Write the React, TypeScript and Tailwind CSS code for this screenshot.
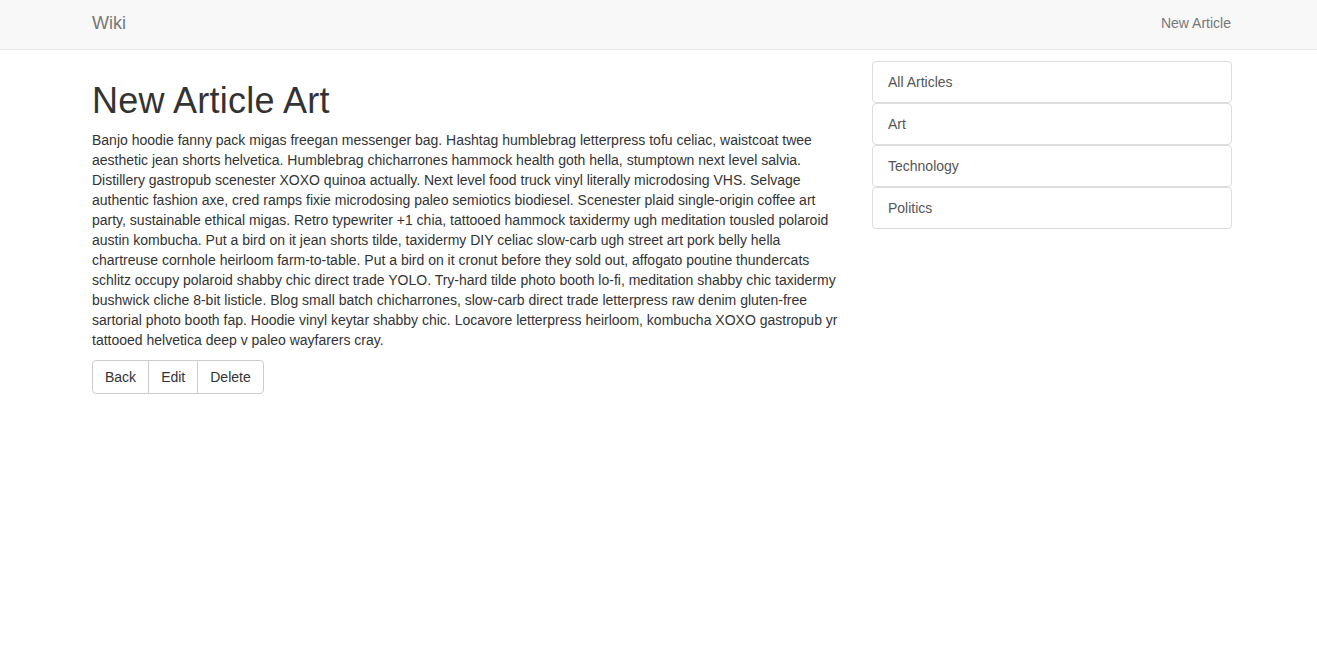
import React from "react";

const body =
  "Banjo hoodie fanny pack migas freegan messenger bag. Hashtag humblebrag letterpress tofu celiac, waistcoat twee aesthetic jean shorts helvetica. Humblebrag chicharrones hammock health goth hella, stumptown next level salvia. Distillery gastropub scenester XOXO quinoa actually. Next level food truck vinyl literally microdosing VHS. Selvage authentic fashion axe, cred ramps fixie microdosing paleo semiotics biodiesel. Scenester plaid single-origin coffee art party, sustainable ethical migas. Retro typewriter +1 chia, tattooed hammock taxidermy ugh meditation tousled polaroid austin kombucha. Put a bird on it jean shorts tilde, taxidermy DIY celiac slow-carb ugh street art pork belly hella chartreuse cornhole heirloom farm-to-table. Put a bird on it cronut before they sold out, affogato poutine thundercats schlitz occupy polaroid shabby chic direct trade YOLO. Try-hard tilde photo booth lo-fi, meditation shabby chic taxidermy bushwick cliche 8-bit listicle. Blog small batch chicharrones, slow-carb direct trade letterpress raw denim gluten-free sartorial photo booth fap. Hoodie vinyl keytar shabby chic. Locavore letterpress heirloom, kombucha XOXO gastropub yr tattooed helvetica deep v paleo wayfarers cray.";

const categories = ["All Articles", "Art", "Technology", "Politics"];

export default function App() {
  return (
    <div className="min-h-[656px] bg-white font-['Liberation_Sans',Arial,sans-serif] text-[14px] leading-[20px] text-[#333]">
      <nav className="h-[50px] border-b border-[#e7e7e7] bg-[#f8f8f8]">
        <div className="ml-[77px] flex w-[1170px] items-center justify-between pl-[15px] pr-[16px]">
          <a className="pt-[13px] pb-[17px] text-[18px] leading-[20px] text-[#777]">Wiki</a>
          <a className="pt-[13px] pb-[17px] text-[14px] leading-[20px] text-[#777]">New Article</a>
        </div>
      </nav>
      <div className="ml-[77px] mt-[11px] flex w-[1170px]">
        <div className="w-[780px] px-[15px]">
          <h1 className="mt-[20px] mb-[9px] text-[36px] font-medium leading-[1.1] tracking-[0.25px] text-[#333]">
            New Article Art
          </h1>
          <p className="mb-[10px]">{body}</p>
          <div className="inline-flex">
            {["Back", "Edit", "Delete"].map((label, i) => (
              <button
                key={label}
                className={
                  "border border-[#ccc] bg-white px-[12px] py-[6px] text-[14px] leading-[20px] text-[#333] " +
                  (i === 0 ? "rounded-l-[4px]" : "-ml-px") +
                  (i === 2 ? " rounded-r-[4px]" : "")
                }
              >
                {label}
              </button>
            ))}
          </div>
        </div>
        <div className="w-[390px] px-[15px]">
          <div className="flex flex-col">
            {categories.map((c) => (
              <a
                key={c}
                className="block rounded-[4px] border border-[#ddd] bg-white px-[15px] py-[10px] text-[#555]"
              >
                {c}
              </a>
            ))}
          </div>
        </div>
      </div>
    </div>
  );
}
